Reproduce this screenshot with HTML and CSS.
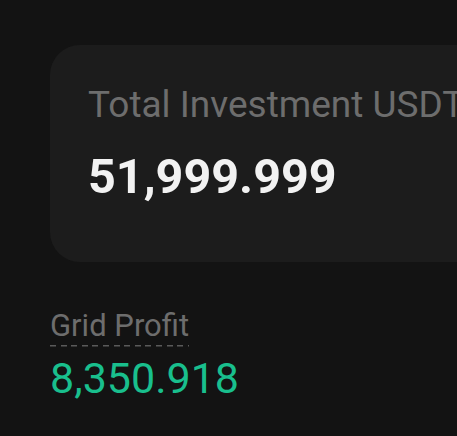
FILE: index.html
```html
<!DOCTYPE html>
<html lang="en">
<head>
    <meta charset="UTF-8">
    <meta name="viewport" content="width=device-width, initial-scale=1.0">
    <title>Grid Summary</title>
    <link rel="stylesheet" href="styles.css">
</head>
<body>
    <div class="page">
        <div class="card">
            <div class="card-label">Total Investment USDT</div>
            <div class="card-value">51,999.999</div>
        </div>
        <div class="profit">
            <span class="profit-label">Grid Profit</span>
            <div class="profit-value">8,350.918</div>
        </div>
    </div>
</body>
</html>
```

FILE: styles.css
```css
body {
    font-family: Roboto, 'Noto Sans', sans-serif;
    background-color: #131313;
    margin: 0;
    padding: 0;
    overflow: hidden;
}
.page {
    padding: 45px 0 0 50px;
}
.card {
    background: #1c1c1c;
    border-radius: 30px 0 0 30px;
    padding: 38px 0 57px 38px;
    margin-right: -20px;
    white-space: nowrap;
}
.card-label {
    color: #6d6d6d;
    font-size: 37px;
    line-height: 43px;
}
.card-value {
    color: #f2f2f2;
    font-size: 48.5px;
    font-weight: 700;
    line-height: 57px;
    margin-top: 22px;
}
.profit {
    margin-top: 46px;
}
.profit-label {
    display: inline-block;
    color: #6d6d6d;
    font-size: 31px;
    line-height: 36px;
    padding-bottom: 3px;
    background-image: repeating-linear-gradient(to right, #5a5a5a 0, #5a5a5a 6px, transparent 6px, transparent 10.6px);
    background-size: 100% 1.5px;
    background-position: left bottom 1px;
    background-repeat: no-repeat;
}
.profit-value {
    color: #19bf8d;
    font-size: 43px;
    line-height: 50px;
    margin-top: 6px;
}
```
